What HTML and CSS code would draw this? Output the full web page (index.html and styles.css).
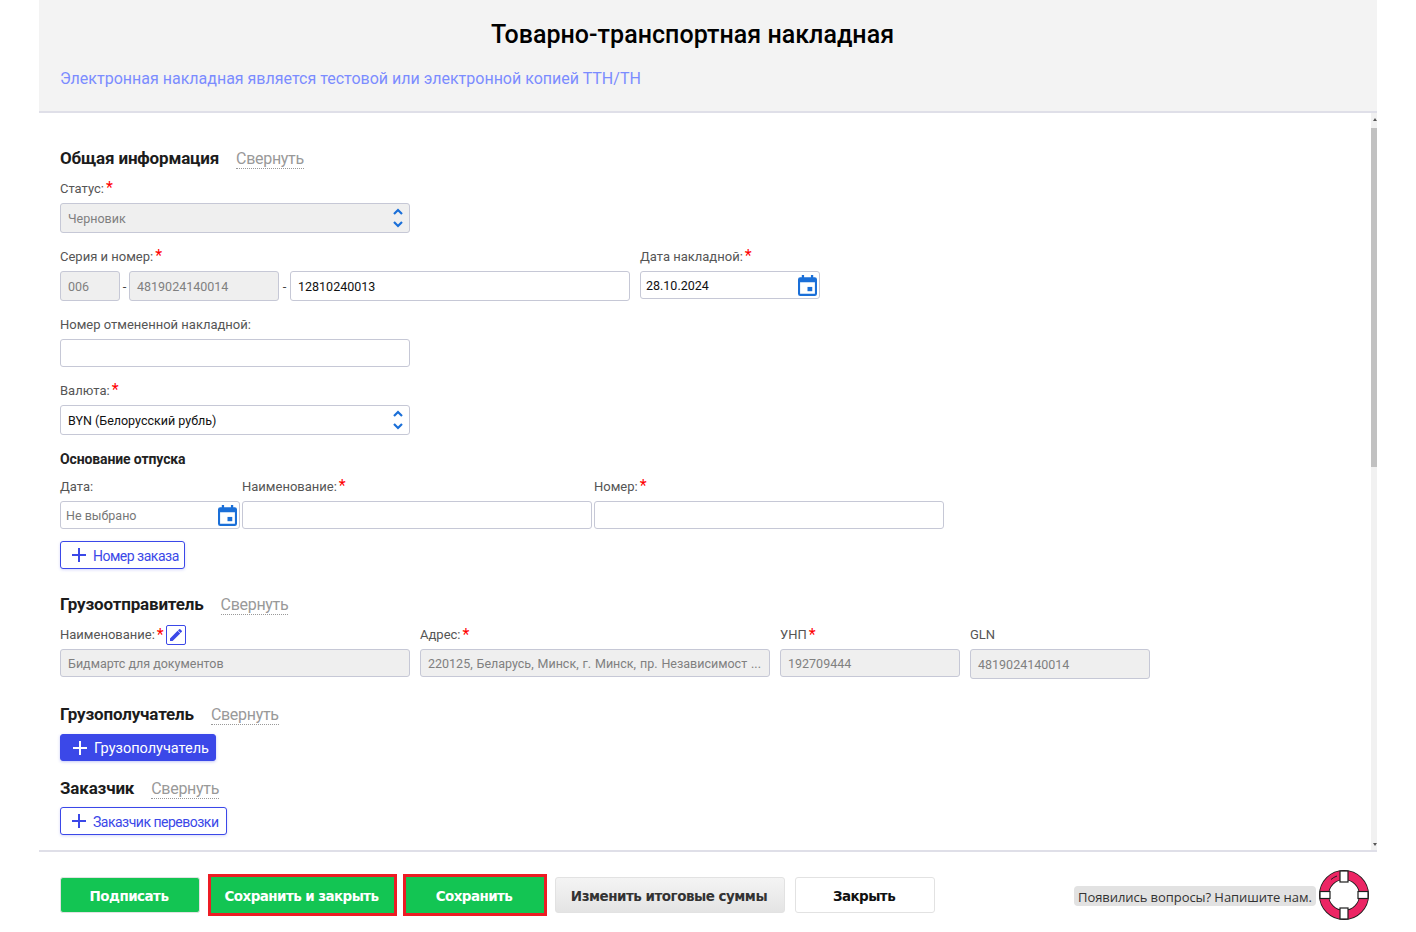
FILE: index.html
```html
<!DOCTYPE html>
<html lang="ru">
<head>
<meta charset="utf-8">
<title>Товарно-транспортная накладная</title>
<link rel="stylesheet" href="styles.css">
</head>
<body>
<svg class="defs" width="0" height="0" aria-hidden="true">
  <symbol id="cal" viewBox="0 0 20 22">
    <path fill="#1a6fd8" d="M4 0h2.4v2.4h7.2V0H16v2.4h1.6A2.4 2.4 0 0 1 20 4.800V19.600A2.400 2.400 0 0 1 17.600 22H2.400A2.400 2.400 0 0 1 0 19.600V4.800A2.400 2.400 0 0 1 2.400 2.400H4zM2.200 7.600V19.800H17.800V7.600z"/>
    <rect fill="#1a6fd8" x="10" y="12.500" width="5" height="4.500"/>
  </symbol>
  <symbol id="updown" viewBox="0 0 10 22">
    <path fill="none" stroke="#1a6fd8" stroke-width="2.200" d="M1 7l4-4 4 4M1 15l4 4 4-4"/>
  </symbol>
  <symbol id="plus" viewBox="0 0 16 16">
    <path fill="none" stroke="currentColor" stroke-width="2" d="M8 1v14M1 8h14"/>
  </symbol>
</svg>
<div class="page">
  <header class="head">
    <h1 class="title">Товарно-транспортная накладная</h1>
    <p class="subtitle">Электронная накладная является тестовой или электронной копией ТТН/ТН</p>
  </header>
  <div class="middle">
    <main class="content">
      <div class="sec-head first"><h2 class="sec-title">Общая информация</h2><a class="collapse">Свернуть</a></div>
      <div class="label l-status">Статус:<span class="req">*</span></div>
      <div class="field select disabled w350 h30"><span>Черновик</span><svg class="ud"><use href="#updown"/></svg></div>

      <div class="row r-serial">
        <div class="col">
          <div class="label">Серия и номер:<span class="req">*</span></div>
          <div class="serial">
            <div class="field disabled w60 h30"><span>006</span></div><span class="dash d1">-</span>
            <div class="field disabled w150 h30"><span>4819024140014</span></div><span class="dash d2">-</span>
            <div class="field w340 h30 filled"><span>12810240013</span></div>
          </div>
        </div>
        <div class="col date-col">
          <div class="label">Дата накладной:<span class="req">*</span></div>
          <div class="field w180 h28 date filled"><span>28.10.2024</span><svg class="cal"><use href="#cal"/></svg></div>
        </div>
      </div>

      <div class="label l-gap">Номер отмененной накладной:</div>
      <div class="field w350 h28"></div>

      <div class="label l-gap">Валюта:<span class="req">*</span></div>
      <div class="field select w350 h30 filled"><span>BYN (Белорусский рубль)</span><svg class="ud"><use href="#updown"/></svg></div>

      <h3 class="sub">Основание отпуска</h3>
      <div class="row basis">
        <div class="col c180">
          <div class="label">Дата:</div>
          <div class="field w180 h28 date placeholder"><span>Не выбрано</span><svg class="cal"><use href="#cal"/></svg></div>
        </div>
        <div class="col c352">
          <div class="label">Наименование:<span class="req">*</span></div>
          <div class="field w350 h28"></div>
        </div>
        <div class="col">
          <div class="label">Номер:<span class="req">*</span></div>
          <div class="field w350 h28"></div>
        </div>
      </div>
      <button class="btn outline b-order"><svg class="plus"><use href="#plus"/></svg><span class="btn-t">Номер заказа</span></button>

      <div class="sec-head s2"><h2 class="sec-title">Грузоотправитель</h2><a class="collapse">Свернуть</a></div>
      <div class="row sender">
        <div class="col">
          <div class="label lbl-edit">Наименование:<span class="req">*</span>
            <span class="edit"><svg viewBox="0 0 14 14" width="14" height="14"><path fill="#3b48e8" d="M1 10.400V13h2.600l7.600-7.600-2.600-2.600zM12.800 3.800a.7.7 0 0 0 0-1L11.200 1.200a.7.7 0 0 0-1 0L9 2.400l2.600 2.600z"/></svg></span>
          </div>
          <div class="field disabled w350 h28"><span>Бидмартс для документов</span></div>
        </div>
        <div class="col">
          <div class="label lbl-edit">Адрес:<span class="req">*</span></div>
          <div class="field disabled w350 h28"><span class="clip">220125, Беларусь, Минск, г. Минск, пр. Независимост ...</span></div>
        </div>
        <div class="col">
          <div class="label lbl-edit">УНП<span class="req">*</span></div>
          <div class="field disabled w180 h28"><span>192709444</span></div>
        </div>
        <div class="col">
          <div class="label lbl-edit">GLN</div>
          <div class="field disabled w180 h30"><span>4819024140014</span></div>
        </div>
      </div>

      <div class="sec-head s3"><h2 class="sec-title">Грузополучатель</h2><a class="collapse">Свернуть</a></div>
      <button class="btn solid b-rec"><svg class="plus"><use href="#plus"/></svg><span class="btn-t">Грузополучатель</span></button>

      <div class="sec-head s4"><h2 class="sec-title">Заказчик</h2><a class="collapse">Свернуть</a></div>
      <button class="btn outline b-cust"><svg class="plus"><use href="#plus"/></svg><span class="btn-t">Заказчик перевозки</span></button>
    </main>
    <div class="scrollbar">
      <span class="arrow up"></span>
      <span class="thumb"></span>
      <span class="arrow down"></span>
    </div>
  </div>
  <footer class="foot">
    <button class="act green w140">Подписать</button>
    <button class="act green red w189">Сохранить и закрыть</button>
    <button class="act green red w144">Сохранить</button>
    <button class="act gray w230">Изменить итоговые суммы</button>
    <button class="act white w140">Закрыть</button>
    <div class="help">
      <span class="pill">Появились вопросы? Напишите нам.</span>
      <svg class="ring" viewBox="0 0 50 50" width="50" height="50">
        <circle cx="25" cy="25" r="20" fill="#fff" stroke="#1d1d1d" stroke-width="10"/>
        <circle cx="25" cy="25" r="20" fill="none" stroke="#ec2564" stroke-width="8.400"/>
        <path d="M12 9.500a17.500 17.500 0 0 1 6-3.500" fill="none" stroke="#1d1d1d" stroke-width="1"/>
        <g fill="#fff" stroke="#1d1d1d" stroke-width="1.200">
          <rect x="21" y="1" width="8" height="11"/>
          <rect x="21" y="38" width="8" height="11"/>
          <rect x="1" y="21.500" width="10" height="7"/>
          <rect x="39" y="21.500" width="10" height="7"/>
        </g>
      </svg>
    </div>
  </footer>
</div>
</body>
</html>
```

FILE: styles.css
```css
* { box-sizing: border-box; }
html, body { margin: 0; height: 100%; background: #fff; overflow: hidden; }
body { font-family: Roboto, "Liberation Sans", sans-serif; color: #222; }
.defs { position: absolute; }

.page { width: 1338px; height: 932px; margin-left: 39px; display: flex; flex-direction: column; }

.head { height: 113px; flex: none; background: #f3f3f3; border-bottom: 2px solid #dfdfe8; padding: 20px 21px 0; }
.title { margin: 0; font-size: 25px; line-height: 30px; font-weight: 500; color: #000; text-align: center; padding-right: 31px; letter-spacing: .04px; }
.subtitle { margin: 19px 0 0; font-size: 16px; line-height: 20px; color: #7b8cff; }

.middle { height: 738px; flex: none; display: flex; overflow: hidden; }
.content { flex: 1; padding: 33px 0 0 21px; min-width: 0; }

.sec-head { display: flex; align-items: baseline; height: 24px; }
.sec-title { margin: 0; font-size: 17px; line-height: 24px; font-weight: 700; color: #1c1c1c; letter-spacing: -.17px; }
.collapse { margin-left: 17px; font-size: 16px; line-height: 19px; color: #999; border-bottom: 1px dotted #999; letter-spacing: -.3px; }
.s2 { margin-top: 23px; }
.s3 { margin-top: 23px; }
.s4 { margin-top: 15px; }

.label { font-size: 13px; line-height: 18px; color: #555; height: 16px; white-space: nowrap; }
.req { color: #f00; font-size: 16px; line-height: 14px; margin-left: 2px; }
.l-status { margin-top: 10px; margin-bottom: 7px; }
.l-gap { margin-top: 15px; margin-bottom: 7px; }

.field { display: flex; align-items: center; flex: none; border: 1px solid #c6c8d6; border-radius: 3px; background: #fff; padding: 0 7px; font-size: 12.500px; color: #000; white-space: nowrap; }
.filled { color: #111; }
.disabled { background: #efefef; color: #808080; }
.placeholder { color: #777; padding-left: 5px; }
.w60 { width: 60px; } .w150 { width: 150px; } .w180 { width: 180px; } .w340 { width: 340px; } .w350 { width: 350px; }
.h28 { height: 28px; } .h30 { height: 30px; }
.select { justify-content: space-between; padding-right: 6px; }
.ud { width: 10px; height: 22px; flex: none; }
.date { justify-content: space-between; padding-right: 1px; }
.date.filled { padding-left: 5px; }
.cal { width: 19px; height: 21px; flex: none; margin-right: 1px; }
.clip { overflow: hidden; word-spacing: .8px; }

.row { display: flex; }
.r-serial { margin-top: 15px; }
.serial { display: flex; align-items: center; margin-top: 7px; }
.dash { text-align: center; font-size: 13px; color: #444; flex: none; }
.d1 { width: 9px; }
.d2 { width: 11px; }
.date-col { margin-left: 10px; }
.date-col .field { margin-top: 7px; }

.sub { margin: 16px 0 0; font-size: 14px; line-height: 16px; font-weight: 700; color: #222; letter-spacing: -.12px; }
.basis { margin-top: 11px; }
.basis .field { margin-top: 7px; }
.c180 { width: 182px; }
.c352 { width: 352px; }

.btn { display: flex; align-items: center; font-family: Roboto, sans-serif; font-size: 14px; letter-spacing: -.5px; border-radius: 3px; padding: 0 0 0 10px; cursor: pointer; white-space: nowrap; }
.btn-t { padding-top: 2px; }
.plus { width: 16px; height: 16px; margin-right: 6px; flex: none; }
.outline { background: #fff; border: 1px solid #3b48e8; color: #3b48e8; box-shadow: 0 1px 3px rgba(59, 72, 232, .2); }
.solid { background: #3b48e8; border: 1px solid #3b48e8; color: #fff; font-size: 14.500px; letter-spacing: 0; box-shadow: 0 1px 3px rgba(59, 72, 232, .3); }
.b-order { width: 125px; height: 28px; margin-top: 12px; }
.b-rec { width: 156px; height: 27px; margin-top: 8px; padding-left: 11px; }
.b-cust { width: 167px; height: 28px; margin-top: 7px; }

.sender { margin-top: 8px; }
.sender .col { margin-right: 10px; }
.lbl-edit { height: 21px; line-height: 21px; margin-bottom: 4px; display: flex; align-items: center; }
.edit { display: flex; align-items: center; justify-content: center; width: 20px; height: 20px; margin-left: 2px; border: 1px solid #3b48e8; border-radius: 2px; }

.scrollbar { width: 6px; flex: none; background: #f1f1f1; display: flex; flex-direction: column; position: relative; }
.thumb { display: block; width: 6px; height: 339px; margin-top: 15px; background: #c1c1c1; }
.arrow { position: absolute; right: 0; width: 0; height: 0; border-left: 2px solid transparent; border-right: 2px solid transparent; }
.up { top: 5px; border-bottom: 3px solid #555; }
.down { bottom: 5px; border-top: 3px solid #555; }

.foot { flex: 1; display: flex; align-items: center; padding: 0 0 0 21px; border-top: 2px solid #dfdfe8; margin-top: -1px; position: relative; }
.act { height: 36px; margin-top: 5px; border: 1px solid #e2e2e2; border-radius: 3px; font-family: Tahoma, "DejaVu Sans", sans-serif; font-weight: 700; font-size: 13.500px; letter-spacing: -.55px; cursor: pointer; padding: 2px 2px 0 0; flex: none; }
.green { background: #13c553; color: #fff; }
.red { height: 42px; border: 3px solid #ed1c24; border-radius: 0; letter-spacing: -.58px; }
.gray { background: linear-gradient(#f4f4f4, #e4e4e4); color: #333; letter-spacing: -.5px; }
.white { background: #fff; color: #111; }
.w140 { width: 140px; } .w189 { width: 189px; } .w144 { width: 144px; } .w230 { width: 230px; }
.w140.green { margin-right: 8px; }
.w189 { margin-right: 6px; }
.w144 { margin-right: 8px; }
.w230 { margin-right: 10px; }

.help { margin-left: auto; display: flex; align-items: center; margin-right: 8px; margin-top: 5px; }
.pill { height: 20px; line-height: 23px; width: 242px; margin-top: 2px; padding-left: 4px; background: #e2e2e2; border-radius: 4px; font-family: "Open Sans", sans-serif; font-size: 13px; letter-spacing: -.06px; color: #333; white-space: nowrap; }
.ring { margin-left: 3px; flex: none; }
```
